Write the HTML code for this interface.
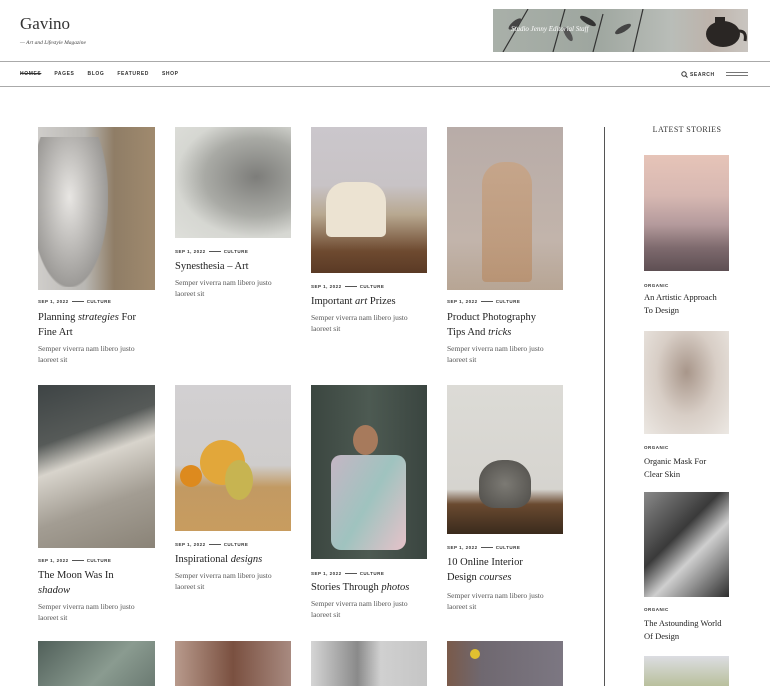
<!DOCTYPE html>
<html><head><meta charset="utf-8"><style>
*{margin:0;padding:0;box-sizing:border-box}
body{width:770px;height:686px;overflow:hidden;background:#fff;position:relative;font-family:"Liberation Serif",serif;color:#222}
.a{position:absolute}
.img{position:absolute}
.meta{position:absolute;font-family:"Liberation Sans",sans-serif;font-size:4.5px;letter-spacing:.5px;color:#333;font-weight:bold}
.meta i{display:inline-block;width:12px;height:1px;background:#555;vertical-align:middle;margin:0 3px}
.t{position:absolute;font-size:10.5px;line-height:15px;color:#222;width:120px}
.s{font-size:8.5px;line-height:13px;width:86px}
.e{position:absolute;font-size:7.5px;line-height:11px;color:#555;width:115px}
.nav{font-family:"Liberation Sans",sans-serif;font-size:5px;letter-spacing:.6px;color:#333;font-weight:bold}
</style></head><body>
<div class="a" style="left:20px;top:14px;font-size:17px;color:#333">Gavino</div>
<div class="a" style="left:20px;top:40px;font-size:5.5px;font-style:italic;color:#444">— Art and Lifestyle Magazine</div>
<div class="a" style="left:493px;top:9px;width:255px;height:43px;background:linear-gradient(90deg,#a9b0a9 0%,#9ea69f 40%,#b9bdb8 70%,#bdb3ab 85%,#c9c5c0 100%);overflow:hidden">
<svg width="255" height="43" style="position:absolute;left:0;top:0"><path d="M10 43 L35 0 M60 43 L72 0 M100 43 L110 5 M140 43 L150 0" stroke="#333" stroke-width="1.2" fill="none"/><ellipse cx="22" cy="15" rx="8" ry="3" fill="#444" transform="rotate(-40 22 15)"/><ellipse cx="95" cy="12" rx="9" ry="3" fill="#333" transform="rotate(30 95 12)"/><ellipse cx="130" cy="20" rx="9" ry="3" fill="#444" transform="rotate(-30 130 20)"/><ellipse cx="75" cy="25" rx="8" ry="3" fill="#555" transform="rotate(60 75 25)"/><ellipse cx="230" cy="25" rx="17" ry="13" fill="#2a2624"/><rect x="222" y="8" width="10" height="6" fill="#2a2624"/><path d="M246 22 q8 0 6 10" stroke="#2a2624" stroke-width="3" fill="none"/></svg>
<div class="a" style="left:18px;top:16px;font-size:7px;font-style:italic;color:#fff">Studio Jenny Editorial Staff</div></div>
<div class="a" style="left:0;top:61px;width:770px;height:1px;background:#aaa"></div>
<div class="a" style="left:0;top:86px;width:770px;height:1px;background:#aaa"></div>
<div class="a nav" style="left:20px;top:71px;word-spacing:0"><span style="text-decoration:line-through">HOMES</span><span style="margin-left:13px">PAGES</span><span style="margin-left:13px">BLOG</span><span style="margin-left:13px">FEATURED</span><span style="margin-left:13px">SHOP</span></div>
<div class="a nav" style="left:681px;top:71px"><svg width="7" height="7" style="vertical-align:middle"><circle cx="3" cy="3" r="2.2" stroke="#333" fill="none"/><path d="M4.6 4.6L6.5 6.5" stroke="#333"/></svg> SEARCH</div>
<div class="a" style="left:726px;top:72px;width:22px;height:1px;background:#777"></div>
<div class="a" style="left:726px;top:75px;width:22px;height:1px;background:#777"></div>

<div class="a" style="left:604px;top:127px;width:1px;height:559px;background:#555"></div>

<!-- row1 -->
<div class="img" style="left:38px;top:127px;width:117px;height:163px;background:linear-gradient(90deg,#cfcdca 0%,#b9b7b3 40%,#8f7d66 65%,#a08a6e 100%)"><div class="a" style="left:0;top:10px;width:70px;height:150px;background:radial-gradient(ellipse at 45% 40%,#e8e6e3,#9c9a97 70%,transparent 72%)"></div></div>
<div class="meta" style="left:38px;top:299px">SEP 1, 2022<i></i>CULTURE</div>
<div class="t" style="left:38px;top:310px">Planning <i>strategies</i> For<br>Fine Art</div>
<div class="e" style="left:38px;top:343px">Semper viverra nam libero justo laoreet sit</div>

<div class="img" style="left:175px;top:127px;width:116px;height:111px;background:radial-gradient(ellipse at 70% 45%,#7d7d7a,#a9aaa5 45%,#d6d7d2 70%,#dedfda)"></div>
<div class="meta" style="left:175px;top:249px">SEP 1, 2022<i></i>CULTURE</div>
<div class="t" style="left:175px;top:259px">Synesthesia – Art</div>
<div class="e" style="left:175px;top:277px">Semper viverra nam libero justo laoreet sit</div>

<div class="img" style="left:311px;top:127px;width:116px;height:146px;background:linear-gradient(180deg,#cbc7cc 0%,#c8c3c6 40%,#b8a890 60%,#6e4a30 85%,#5a3a25 100%)"><div class="a" style="left:15px;top:55px;width:60px;height:55px;background:#ece3d2;border-radius:20px 20px 5px 5px"></div></div>
<div class="meta" style="left:311px;top:284px">SEP 1, 2022<i></i>CULTURE</div>
<div class="t" style="left:311px;top:294px">Important <i>art</i> Prizes</div>
<div class="e" style="left:311px;top:312px">Semper viverra nam libero justo laoreet sit</div>

<div class="img" style="left:447px;top:127px;width:116px;height:163px;background:linear-gradient(180deg,#b8aca8,#c2b4ab 70%,#b7a594)"><div class="a" style="left:35px;top:35px;width:50px;height:120px;background:linear-gradient(#c8a383,#b88f6c);border-radius:22px 22px 4px 4px;opacity:.8"></div></div>
<div class="meta" style="left:447px;top:299px">SEP 1, 2022<i></i>CULTURE</div>
<div class="t" style="left:447px;top:310px">Product Photography<br>Tips And <i>tricks</i></div>
<div class="e" style="left:447px;top:343px">Semper viverra nam libero justo laoreet sit</div>

<!-- row2 -->
<div class="img" style="left:38px;top:385px;width:117px;height:163px;background:linear-gradient(160deg,#3e4445 0%,#565a58 30%,#d8d4cc 45%,#a39d93 70%,#8a8377 100%)"></div>
<div class="meta" style="left:38px;top:558px">SEP 1, 2022<i></i>CULTURE</div>
<div class="t" style="left:38px;top:568px">The Moon Was In<br><i>shadow</i></div>
<div class="e" style="left:38px;top:601px">Semper viverra nam libero justo laoreet sit</div>

<div class="img" style="left:175px;top:385px;width:116px;height:146px;background:linear-gradient(180deg,#d2d0d2 0%,#cfcdcc 55%,#c29a63 70%,#c89c5f 100%)"><div class="a" style="left:25px;top:55px;width:45px;height:45px;border-radius:50%;background:#e2a73a"></div><div class="a" style="left:50px;top:75px;width:28px;height:40px;border-radius:50%;background:#c7b451"></div><div class="a" style="left:5px;top:80px;width:22px;height:22px;border-radius:50%;background:#dd8a1e"></div></div>
<div class="meta" style="left:175px;top:542px">SEP 1, 2022<i></i>CULTURE</div>
<div class="t" style="left:175px;top:552px">Inspirational <i>designs</i></div>
<div class="e" style="left:175px;top:570px">Semper viverra nam libero justo laoreet sit</div>

<div class="img" style="left:311px;top:385px;width:116px;height:174px;background:linear-gradient(90deg,#3b4640,#4d5a52 50%,#3a4540)"><div class="a" style="left:20px;top:70px;width:75px;height:95px;background:linear-gradient(120deg,#c5b6c4,#9fc3bf,#e6c2c9);border-radius:10px"></div><div class="a" style="left:42px;top:40px;width:25px;height:30px;background:#a77a5c;border-radius:50%"></div></div>
<div class="meta" style="left:311px;top:571px">SEP 1, 2022<i></i>CULTURE</div>
<div class="t" style="left:311px;top:580px">Stories Through <i>photos</i></div>
<div class="e" style="left:311px;top:598px">Semper viverra nam libero justo laoreet sit</div>

<div class="img" style="left:447px;top:385px;width:116px;height:149px;background:linear-gradient(180deg,#dcdbd6 0%,#d6d4cf 70%,#6a4a30 80%,#3a2a1c 100%)"><div class="a" style="left:32px;top:75px;width:52px;height:48px;border-radius:45% 45% 30% 30%;background:radial-gradient(#7c7a74,#4e4c48)"></div></div>
<div class="meta" style="left:447px;top:545px">SEP 1, 2022<i></i>CULTURE</div>
<div class="t" style="left:447px;top:555px">10 Online Interior<br>Design <i>courses</i></div>
<div class="e" style="left:447px;top:590px">Semper viverra nam libero justo laoreet sit</div>

<!-- row3 -->
<div class="img" style="left:38px;top:641px;width:117px;height:45px;background:linear-gradient(135deg,#51605a,#8a9b90 60%,#6b7a72)"></div>
<div class="img" style="left:175px;top:641px;width:116px;height:45px;background:linear-gradient(90deg,#b89a8c,#7a5040 50%,#a88a80)"></div>
<div class="img" style="left:311px;top:641px;width:116px;height:45px;background:linear-gradient(90deg,#d5d5d5,#8a8a8a 40%,#d0d0d0 60%,#c5c5c5)"></div>
<div class="img" style="left:447px;top:641px;width:116px;height:45px;background:linear-gradient(90deg,#7a5a4a,#6f6870 30%,#7c7782)"><div class="a" style="left:23px;top:8px;width:10px;height:10px;border-radius:50%;background:#e0c030"></div></div>

<!-- sidebar -->
<div class="a" style="left:644px;top:125px;width:86px;text-align:center;font-size:8px;letter-spacing:.4px;color:#333">LATEST STORIES</div>
<div class="img" style="left:644px;top:155px;width:85px;height:116px;background:linear-gradient(180deg,#e6c4b8 0%,#d7b8b2 35%,#b49a9c 60%,#7e6a6e 80%,#5e4f53 100%)"></div>
<div class="meta" style="left:644px;top:283px">ORGANIC</div>
<div class="t s" style="left:644px;top:291px">An Artistic Approach<br>To Design</div>
<div class="img" style="left:644px;top:331px;width:85px;height:103px;background:radial-gradient(ellipse at 50% 40%,#a8968a,#d8cec6 50%,#ece8e3)"></div>
<div class="meta" style="left:644px;top:445px">ORGANIC</div>
<div class="t s" style="left:644px;top:455px">Organic Mask For<br>Clear Skin</div>
<div class="img" style="left:644px;top:492px;width:85px;height:105px;background:linear-gradient(135deg,#888,#3a3a3a 40%,#cfcfcf 60%,#2e2e2e)"></div>
<div class="meta" style="left:644px;top:607px">ORGANIC</div>
<div class="t s" style="left:644px;top:617px">The Astounding World<br>Of Design</div>
<div class="img" style="left:644px;top:656px;width:85px;height:30px;background:linear-gradient(180deg,#dcdde2,#b9c09c)"></div>
</body></html>
